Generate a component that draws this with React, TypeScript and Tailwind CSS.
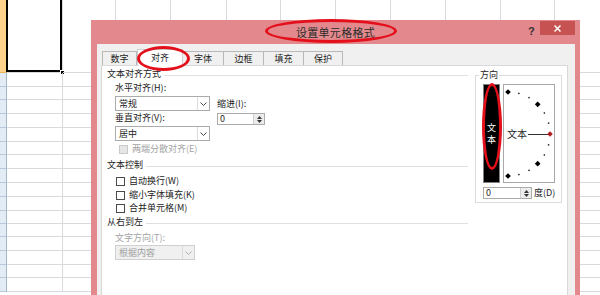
import React from "react";

/* ================= SHEET BACKGROUND ================= */
const colWidths = ["w-[56px]", "w-[53px]", "w-[55px]", "w-[56px]", "w-[54px]", "w-[55px]", "w-[55px]", "w-[55px]", "w-[55px]", "w-[54px]", "w-[55px]"];
const rowHeights = ["h-[73px]", "h-[14px]", "h-[13px]", "h-[14px]", "h-[14px]", "h-[14px]", "h-[13px]", "h-[14px]", "h-[14px]", "h-[14px]", "h-[14px]", "h-[13px]", "h-[13px]", "h-[14px]", "h-[14px]", "h-[13px]", "h-[14px]"];

const Sheet = () => (
  <div className="flex flex-col">
    {rowHeights.map((h, r) => (
      <div key={r} className={`flex shrink-0 ${h}`}>
        <div
          className={`w-[7px] shrink-0 border-r border-b border-r-[#9fb6cf] ${
            r === 0 ? "bg-[#fcd28c] border-b-[#e8b45c]" : "bg-[#e3ebf5] border-b-[#b8c9dc]"
          }`}
        />
        {colWidths.map((w, c) => (
          <div key={c} className={`relative shrink-0 ${w} border-r border-b border-[#d8dadc]`}>
            {r === 0 && c === 0 && (
              <>
                <div className="absolute -left-px -top-px right-0 bottom-0 border-2 border-t-0 border-black" />
                <div className="absolute -right-[3px] -bottom-[3px] w-[5px] h-[5px] bg-black border border-white" />
              </>
            )}
          </div>
        ))}
      </div>
    ))}
  </div>
);

/* ================= SMALL CONTROLS ================= */
const Chevron = ({ color = "#444" }: { color?: string }) => (
  <svg width="7" height="4" viewBox="0 0 7 4">
    <path d="M0.5 0.5 L3.5 3.5 L6.5 0.5" fill="none" stroke={color} strokeWidth="1" />
  </svg>
);

const Select = ({ value, className, disabled }: { value: string; className: string; disabled?: boolean }) => (
  <div
    className={`flex h-[15px] border ${className} ${
      disabled ? "border-[#d0d0d0] bg-[#f0f0f0] text-[#a0a0a0]" : "border-[#ababab] bg-white text-[#222]"
    }`}
  >
    <span className="flex-1 pl-[3px] leading-[13px]">{value}</span>
    <span className="w-[12px] flex items-center justify-center border-l border-[#dcdcdc]">
      <Chevron color={disabled ? "#b0b0b0" : "#444"} />
    </span>
  </div>
);

const Spin = ({ className }: { className: string }) => (
  <div className={`flex h-[12px] border border-[#ababab] bg-white ${className}`}>
    <span className="flex-1 pl-[2px] leading-[10px] text-[9px]">0</span>
    <span className="w-[11px] flex flex-col items-center justify-center gap-[1px] bg-[#ececec] border-l border-[#cfcfcf]">
      <svg width="5" height="3" viewBox="0 0 5 3"><path d="M0 3 L2.5 0 L5 3 Z" fill="#333" /></svg>
      <svg width="5" height="3" viewBox="0 0 5 3"><path d="M0 0 L2.5 3 L5 0 Z" fill="#333" /></svg>
    </span>
  </div>
);

const Checkbox = ({ label, disabled, className }: { label: string; disabled?: boolean; className: string }) => (
  <div className={`flex items-center h-[12px] ${className}`}>
    <span
      className={`w-[9px] h-[9px] border ${
        disabled ? "border-[#c8c8c8] bg-[#e6e6e6]" : "border-[#4a4a4a] bg-white"
      }`}
    />
    <span className={`ml-[4px] leading-[12px] ${disabled ? "text-[#a3a3a3]" : "text-[#222]"}`}>{label}</span>
  </div>
);

const GroupHeader = ({ label, className }: { label: string; className: string }) => (
  <div className={`flex items-center h-[12px] ${className}`}>
    <span className="leading-[12px]">{label}</span>
    <div className="flex-1 ml-[3px] mt-[2px] h-px bg-[#dfdfdf]" />
  </div>
);

/* ================= ORIENTATION DIAL ================= */
const Dial = () => {
  const cx = 4;
  const cy = 49;
  const r = 42;
  const marks = [90, 75, 60, 45, 30, 15, -15, -30, -45, -60, -75, -90];
  return (
    <svg width="50" height="97" className="block">
      {marks.map((a) => {
        const rad = (a * Math.PI) / 180;
        const x = cx + r * Math.cos(rad);
        const y = cy - r * Math.sin(rad);
        const big = Math.abs(a) === 90 || Math.abs(a) === 45;
        return big ? (
          <rect key={a} x={x - 2} y={y - 2} width="4" height="4" fill="#000" transform={`rotate(45 ${x} ${y})`} />
        ) : (
          <rect key={a} x={x - 0.7} y={y - 0.7} width="1.4" height="1.4" fill="#111" />
        );
      })}
      <text x="3" y="53" fontSize="10" fill="#222" fontFamily="'Noto Sans CJK SC', sans-serif">
        文本
      </text>
      <line x1="24" y1="49.5" x2="44" y2="49.5" stroke="#333" strokeWidth="1" />
      <rect x={44} y={47} width="4" height="4" fill="#b02020" transform="rotate(45 46 49)" />
    </svg>
  );
};

/* ================= DIALOG ================= */
const tabs = ["数字", "对齐", "字体", "边框", "填充", "保护"];
const tabWidths = ["w-[35px]", "w-[46px]", "w-[42px]", "w-[41px]", "w-[41px]", "w-[40px]"];

const Dialog = () => (
  <div className="absolute left-[91px] top-[20px] w-[489px] h-[290px] bg-[#e3898d] flex flex-col">
    {/* TITLE BAR */}
    <div className="relative h-[24px] shrink-0 flex items-center justify-center">
      <span className="text-[11px] text-[#2b2b2b] tracking-[0.3px]">设置单元格格式</span>
      <div className="absolute left-[174px] -top-[1px] w-[132px] h-[24px] rounded-[50%] border-[3px] border-[#e3101b]" />
      <span className="absolute left-[437px] top-[3px] text-[11px] font-bold text-[#333] font-['Liberation_Sans',sans-serif]">
        ?
      </span>
      <div className="absolute left-[449px] top-[1px] w-[35px] h-[14px] bg-[#c75252] flex items-center justify-center">
        <svg width="7" height="7" viewBox="0 0 7 7">
          <path d="M0.5 0.5 L6.5 6.5 M6.5 0.5 L0.5 6.5" stroke="#fff" strokeWidth="1.5" />
        </svg>
      </div>
    </div>

    {/* BODY */}
    <div className="flex-1 ml-[6px] mr-[5px] bg-[#f0f0f0] pt-[5px] pl-[4px] pr-[7px] flex flex-col">
      {/* TABS */}
      <div className="flex items-end h-[16px] pl-[1px] relative z-10">
        {tabs.map((t, i) =>
          i === 1 ? (
            <div
              key={t}
              className={`relative ${tabWidths[i]} h-[17px] -mb-px bg-white border border-b-0 border-[#d0d0d0] flex items-center justify-center`}
            >
              <span className="leading-[12px]">{t}</span>
              <div className="absolute -left-[1px] -top-[4px] w-[53px] h-[25px] rounded-[50%] border-[3px] border-[#e3101b]" />
            </div>
          ) : (
            <div
              key={t}
              className={`${tabWidths[i]} h-[14px] bg-[#f0f0f0] border border-b-0 border-[#b8b8b8] -ml-px first:ml-0 flex items-center justify-center`}
            >
              <span className="leading-[12px]">{t}</span>
            </div>
          )
        )}
      </div>

      {/* PANEL */}
      <div className="flex-1 bg-white border border-[#d9d9d9] pl-[5px] pr-[5px] pt-[2px] flex">
        {/* LEFT COLUMN */}
        <div className="w-[361px] flex flex-col">
          <GroupHeader label="文本对齐方式" className="" />
          <div className="flex pl-[8px]">
            <div className="w-[95px] flex flex-col">
              <span className="mt-[2px] h-[12px] leading-[12px]">水平对齐(H):</span>
              <Select value="常规" className="mt-[2px] w-[95px]" />
              <span className="mt-[1px] h-[12px] leading-[12px]">垂直对齐(V):</span>
              <Select value="居中" className="mt-[2px] w-[95px]" />
            </div>
            <div className="ml-[7px] flex flex-col">
              <span className="mt-[18px] h-[12px] leading-[12px]">缩进(I):</span>
              <Spin className="mt-[3px] w-[48px]" />
            </div>
          </div>
          <Checkbox label="两端分散对齐(E)" disabled className="mt-[2px] ml-[12px]" />

          <GroupHeader label="文本控制" className="mt-[4px]" />
          <Checkbox label="自动换行(W)" className="mt-[4px] ml-[9px]" />
          <Checkbox label="缩小字体填充(K)" className="mt-[2px] ml-[9px]" />
          <Checkbox label="合并单元格(M)" className="mt-[1px] ml-[9px]" />

          <GroupHeader label="从右到左" className="mt-[2px]" />
          <span className="mt-[4px] ml-[8px] h-[12px] leading-[12px] text-[#a3a3a3]">文字方向(T):</span>
          <Select value="根据内容" disabled className="mt-[1px] ml-[8px] w-[80px]" />
        </div>

        {/* RIGHT COLUMN */}
        <div className="ml-[7px] w-[87px]">
          <div className="relative mt-[7px] h-[128px] border border-[#dcdcdc] pt-[8px] pl-[7px]">
            <span className="absolute -top-[7px] left-[3px] bg-white px-[1px] leading-[12px]">方向</span>
            <div className="flex">
              <div className="relative w-[17px] h-[99px] bg-black border border-[#808080] flex flex-col items-center justify-center text-white">
                <span className="block h-[11px] leading-[11px] text-[9px]">文</span>
                <span className="block h-[11px] leading-[11px] text-[9px] mt-px">本</span>
                <div className="absolute -left-[2px] -top-[2px] w-[20px] h-[87px] rounded-[50%] border-[3px] border-[#e3101b]" />
              </div>
              <div className="ml-[3px] w-[52px] h-[99px] border border-[#a8a8a8] bg-white">
                <Dial />
              </div>
            </div>
            <div className="flex items-center mt-[4px]">
              <Spin className="w-[49px]" />
              <span className="ml-[2px] leading-[12px]">度(D)</span>
            </div>
          </div>
        </div>
      </div>
    </div>
  </div>
);

export default function App() {
  return (
    <div className="relative w-[600px] h-[295px] overflow-hidden bg-white text-[9px] text-[#222] font-['Noto_Sans_CJK_SC',sans-serif]">
      <Sheet />
      <Dialog />
    </div>
  );
}
